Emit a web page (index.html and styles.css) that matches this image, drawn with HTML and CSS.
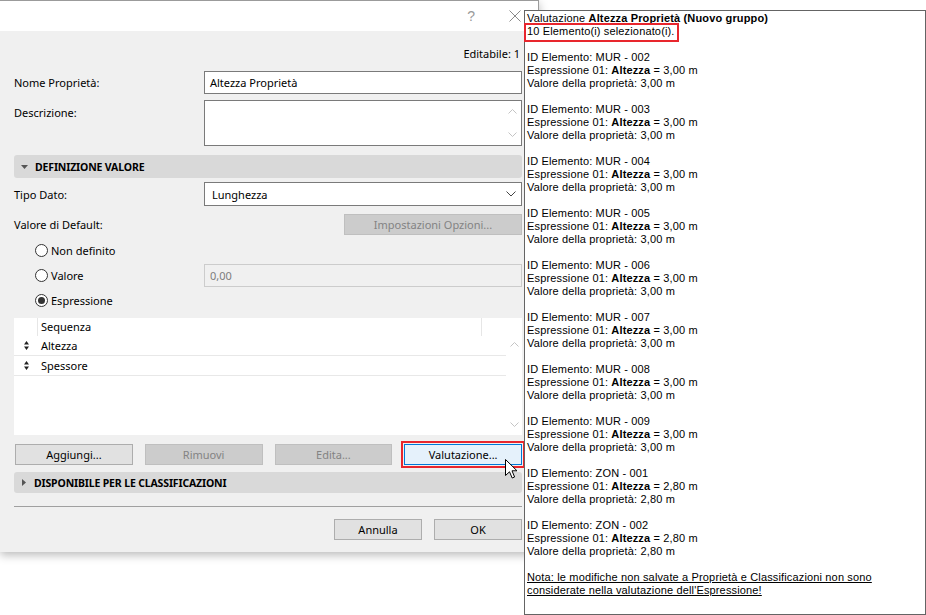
FILE: index.html
```html
<!DOCTYPE html>
<html lang="it">
<head>
<meta charset="utf-8">
<title>Proprietà</title>
<link rel="stylesheet" href="styles.css">
</head>
<body>
<div class="dialog">
  <div class="titlebar">
    <span class="help">?</span>
    <svg class="close" width="12" height="12" viewBox="0 0 12 12"><path d="M0.5 0.5 L11.5 11.5 M11.5 0.5 L0.5 11.5" stroke="#8a8a8a" stroke-width="1" fill="none"/></svg>
  </div>
  <div class="dbody">
    <div class="editable">Editabile: 1</div>

    <div class="frow r-nome">
      <div class="lbl">Nome Proprietà:</div>
      <div class="field input">Altezza Proprietà</div>
    </div>

    <div class="frow r-desc">
      <div class="lbl lbl-top">Descrizione:</div>
      <div class="field textarea">
        <div class="vscroll">
          <svg width="9" height="5" viewBox="0 0 9 5"><path d="M0.5 4.5 L4.5 0.5 L8.5 4.5" stroke="#c4c4c4" fill="none"/></svg>
          <svg width="9" height="5" viewBox="0 0 9 5"><path d="M0.5 0.5 L4.5 4.5 L8.5 0.5" stroke="#c4c4c4" fill="none"/></svg>
        </div>
      </div>
    </div>

    <div class="section s-def">
      <svg class="tri" width="7" height="4" viewBox="0 0 7 4"><path d="M0 0 L7 0 L3.5 4 Z" fill="#555"/></svg>
      <span>DEFINIZIONE VALORE</span>
    </div>

    <div class="frow r-tipo">
      <div class="lbl">Tipo Dato:</div>
      <div class="field select">
        <span>Lunghezza</span>
        <svg class="chev" width="10" height="6" viewBox="0 0 10 6"><path d="M0.5 0.5 L5 5 L9.5 0.5" stroke="#444" fill="none"/></svg>
      </div>
    </div>

    <div class="frow r-default">
      <div class="lbl">Valore di Default:</div>
      <div class="btn disabled b-opz">Impostazioni Opzioni...</div>
    </div>

    <div class="radios">
      <div class="frow rrow">
        <div class="lbl rlbl"><span class="radio"></span>Non definito</div>
      </div>
      <div class="frow rrow">
        <div class="lbl rlbl"><span class="radio"></span>Valore</div>
        <div class="field input dis">0,00</div>
      </div>
      <div class="frow rrow">
        <div class="lbl rlbl"><span class="radio on"></span>Espressione</div>
      </div>
    </div>

    <div class="list">
      <div class="list-main">
        <div class="lhead">
          <div class="c-icon"></div>
          <div class="c-name">Sequenza</div>
          <div class="c-end"></div>
        </div>
        <div class="lrow">
          <div class="c-icon"><svg width="5" height="9" viewBox="0 0 5 9"><path d="M0 3.5 L5 3.5 L2.5 0 Z M0 5.5 L5 5.5 L2.5 9 Z" fill="#222"/></svg></div>
          <div class="c-text">Altezza</div>
        </div>
        <div class="lrow">
          <div class="c-icon"><svg width="5" height="9" viewBox="0 0 5 9"><path d="M0 3.5 L5 3.5 L2.5 0 Z M0 5.5 L5 5.5 L2.5 9 Z" fill="#222"/></svg></div>
          <div class="c-text">Spessore</div>
        </div>
      </div>
      <div class="list-scroll">
        <svg width="9" height="5" viewBox="0 0 9 5"><path d="M0.5 4.5 L4.5 0.5 L8.5 4.5" stroke="#c4c4c4" fill="none"/></svg>
        <svg width="9" height="5" viewBox="0 0 9 5"><path d="M0.5 0.5 L4.5 4.5 L8.5 0.5" stroke="#c4c4c4" fill="none"/></svg>
      </div>
    </div>

    <div class="btnrow">
      <div class="btn">Aggiungi...</div>
      <div class="btn disabled">Rimuovi</div>
      <div class="btn disabled">Edita...</div>
      <div class="btn focus">Valutazione...</div>
    </div>

    <div class="section s-class">
      <svg class="tri2" width="4" height="7" viewBox="0 0 4 7"><path d="M0 0 L4 3.5 L0 7 Z" fill="#555"/></svg>
      <span>DISPONIBILE PER LE CLASSIFICAZIONI</span>
    </div>

    <div class="sep"></div>

    <div class="footer">
      <div class="btn fbtn">Annulla</div>
      <div class="btn fbtn">OK</div>
    </div>
  </div>
</div>

<div class="panel">
  <div class="pl">Valutazione <b>Altezza Proprietà (Nuovo gruppo)</b></div>
  <div class="pl"><span class="sel">10 Elemento(i) selezionato(i).</span></div>
  <div class="pl"></div>
  <div class="pl">ID Elemento: MUR - 002</div>
  <div class="pl">Espressione 01: <b>Altezza</b> = 3,00 m</div>
  <div class="pl">Valore della proprietà: 3,00 m</div>
  <div class="pl"></div>
  <div class="pl">ID Elemento: MUR - 003</div>
  <div class="pl">Espressione 01: <b>Altezza</b> = 3,00 m</div>
  <div class="pl">Valore della proprietà: 3,00 m</div>
  <div class="pl"></div>
  <div class="pl">ID Elemento: MUR - 004</div>
  <div class="pl">Espressione 01: <b>Altezza</b> = 3,00 m</div>
  <div class="pl">Valore della proprietà: 3,00 m</div>
  <div class="pl"></div>
  <div class="pl">ID Elemento: MUR - 005</div>
  <div class="pl">Espressione 01: <b>Altezza</b> = 3,00 m</div>
  <div class="pl">Valore della proprietà: 3,00 m</div>
  <div class="pl"></div>
  <div class="pl">ID Elemento: MUR - 006</div>
  <div class="pl">Espressione 01: <b>Altezza</b> = 3,00 m</div>
  <div class="pl">Valore della proprietà: 3,00 m</div>
  <div class="pl"></div>
  <div class="pl">ID Elemento: MUR - 007</div>
  <div class="pl">Espressione 01: <b>Altezza</b> = 3,00 m</div>
  <div class="pl">Valore della proprietà: 3,00 m</div>
  <div class="pl"></div>
  <div class="pl">ID Elemento: MUR - 008</div>
  <div class="pl">Espressione 01: <b>Altezza</b> = 3,00 m</div>
  <div class="pl">Valore della proprietà: 3,00 m</div>
  <div class="pl"></div>
  <div class="pl">ID Elemento: MUR - 009</div>
  <div class="pl">Espressione 01: <b>Altezza</b> = 3,00 m</div>
  <div class="pl">Valore della proprietà: 3,00 m</div>
  <div class="pl"></div>
  <div class="pl">ID Elemento: ZON - 001</div>
  <div class="pl">Espressione 01: <b>Altezza</b> = 2,80 m</div>
  <div class="pl">Valore della proprietà: 2,80 m</div>
  <div class="pl"></div>
  <div class="pl">ID Elemento: ZON - 002</div>
  <div class="pl">Espressione 01: <b>Altezza</b> = 2,80 m</div>
  <div class="pl">Valore della proprietà: 2,80 m</div>
  <div class="pl"></div>
  <div class="pl note">Nota: le modifiche non salvate a Proprietà e Classificazioni non sono</div>
  <div class="pl note">considerate nella valutazione dell'Espressione!</div>
</div>

<svg class="cursor" width="13" height="20" viewBox="0 0 13 20"><path d="M0.5 0.5 L0.5 16.5 L4.5 12.8 L7.2 19 L9.6 18 L7 11.8 L12 11.8 Z" fill="#fff" stroke="#000" stroke-width="1" stroke-linejoin="round"/></svg>
</body>
</html>
```
FILE: styles.css
```css
html, body {
  margin: 0;
  padding: 0;
  background: #ffffff;
}
body {
  font-family: "Noto Sans", "Open Sans", sans-serif;
  font-size: 11px;
  color: #000;
  width: 926px;
  height: 615px;
  overflow: hidden;
  position: relative;
}

.dialog {
  width: 539px;
  height: 552px;
  box-sizing: border-box;
  background: #f0f0f0;
  border-top: 1px solid #9b9b9b;
  border-right: 1px solid #9b9b9b;
  box-shadow: 0 3px 9px rgba(0, 0, 0, 0.28);
}

.titlebar {
  height: 30px;
  background: #ffffff;
  display: flex;
  align-items: center;
  justify-content: flex-end;
  padding-right: 17px;
  gap: 34px;
}
.help {
  color: #9a9a9a;
  font-size: 14px;
  font-family: "Liberation Sans", sans-serif;
}
.close { display: block; }

.dbody {
  padding: 15px 16px 0 14px;
}

.editable {
  height: 16px;
  line-height: 16px;
  text-align: right;
  padding-right: 2px;
}

.frow {
  display: flex;
  align-items: center;
}
.lbl {
  width: 190px;
  flex: none;
}
.field {
  flex: 1;
  box-sizing: border-box;
  background: #fff;
  border: 1px solid #7a7a7a;
}
.input {
  height: 23px;
  line-height: 21px;
  padding-left: 5px;
}
.input.dis {
  height: 23px;
  line-height: 21px;
  background: #f0f0f0;
  border-color: #cccccc;
  color: #7d7d7d;
}

.r-nome { margin-top: 9px; }
.r-desc { margin-top: 6px; align-items: flex-start; }
.lbl-top { padding-top: 5px; }
.textarea {
  height: 46px;
  position: relative;
  display: flex;
  justify-content: flex-end;
}
.vscroll {
  width: 17px;
  display: flex;
  flex-direction: column;
  justify-content: space-between;
  align-items: center;
  padding: 8px 0 8px;
}
.vscroll svg, .list-scroll svg { display: block; }

.section {
  background: #d9d9d9;
  border-radius: 3px;
  display: flex;
  align-items: center;
  font-weight: bold;
  font-size: 10.5px;
  letter-spacing: -0.15px;
}
.s-def {
  margin-top: 9px;
  height: 23px;
  padding-left: 7px;
}
.s-def .tri { margin-right: 7px; }
.s-class {
  margin-top: 7px;
  height: 21px;
  padding-left: 8px;
}
.s-class .tri2 { margin-right: 8px; }

.r-tipo { margin-top: 4px; }
.select {
  height: 24px;
  display: flex;
  align-items: center;
  justify-content: space-between;
  padding: 0 5px 0 7px;
}
.chev { display: block; }

.r-default {
  margin-top: 8px;
  justify-content: space-between;
}

.btn {
  box-sizing: border-box;
  height: 21px;
  background: #e1e1e1;
  border: 1px solid #adadad;
  display: flex;
  align-items: center;
  justify-content: center;
}
.btn.disabled {
  background: #cccccc;
  border-color: #bfbfbf;
  color: #838383;
}
.btn.focus {
  background: #e5f1fb;
  border-color: #0078d7;
  outline: 2px solid #e8262d;
  outline-offset: 1px;
}
.b-opz {
  width: 178px;
  height: 21px;
}

.radios { margin-top: 3px; }
.rrow { height: 25px; }
.rlbl {
  display: flex;
  align-items: center;
  padding-left: 21px;
  box-sizing: border-box;
}
.radio {
  width: 13px;
  height: 13px;
  box-sizing: border-box;
  border: 1px solid #333;
  border-radius: 50%;
  background: #fff;
  margin-right: 3px;
  display: flex;
  align-items: center;
  justify-content: center;
}
.radio.on::after {
  content: "";
  width: 7px;
  height: 7px;
  border-radius: 50%;
  background: #333;
}

.list {
  margin-top: 5px;
  height: 117px;
  background: #fff;
  display: flex;
}
.list-main {
  flex: 1;
}
.lhead {
  height: 18px;
  display: flex;
}
.c-icon {
  width: 24px;
  box-sizing: border-box;
  display: flex;
  align-items: center;
  justify-content: flex-start;
  padding-left: 10px;
}
.lhead .c-icon { border-right: 1px solid #e6e6e6; }
.c-name {
  width: 444px;
  box-sizing: border-box;
  border-right: 1px solid #e6e6e6;
  padding-left: 3px;
  line-height: 18px;
}
.c-end { flex: 1; }
.lrow {
  height: 20px;
  box-sizing: border-box;
  border-bottom: 1px solid #e8e8e8;
  display: flex;
  align-items: center;
}
.c-text { padding-left: 3px; }
.list-scroll {
  width: 16px;
  display: flex;
  flex-direction: column;
  justify-content: space-between;
  align-items: center;
  padding: 24px 0 8px;
  box-sizing: border-box;
}

.btnrow {
  margin-top: 9px;
  display: flex;
  gap: 12px;
  padding-left: 1px;
}
.btnrow .btn { width: 118px; }

.sep {
  margin-top: 13px;
  height: 1px;
  background: #a0a0a0;
}

.footer {
  margin-top: 12px;
  display: flex;
  justify-content: flex-end;
  gap: 12px;
}
.fbtn { width: 88px; }

.panel {
  position: absolute;
  left: 524px;
  top: 10px;
  width: 402px;
  height: 605px;
  box-sizing: border-box;
  border: 1px solid #646464;
  background: #fff;
  padding: 1px 0 0 2px;
  font-family: "Liberation Sans", Arial, sans-serif;
  font-size: 11px;
  letter-spacing: 0.15px;
}
.pl {
  height: 13px;
  line-height: 13px;
  white-space: nowrap;
}
.sel {
  position: relative;
  display: inline-block;
}
.sel::after {
  content: "";
  position: absolute;
  left: -3px;
  right: -4px;
  top: -2px;
  bottom: -4px;
  border: 2px solid #e8262d;
}
.note { text-decoration: underline; }

.cursor {
  position: absolute;
  left: 505px;
  top: 459px;
}
```
